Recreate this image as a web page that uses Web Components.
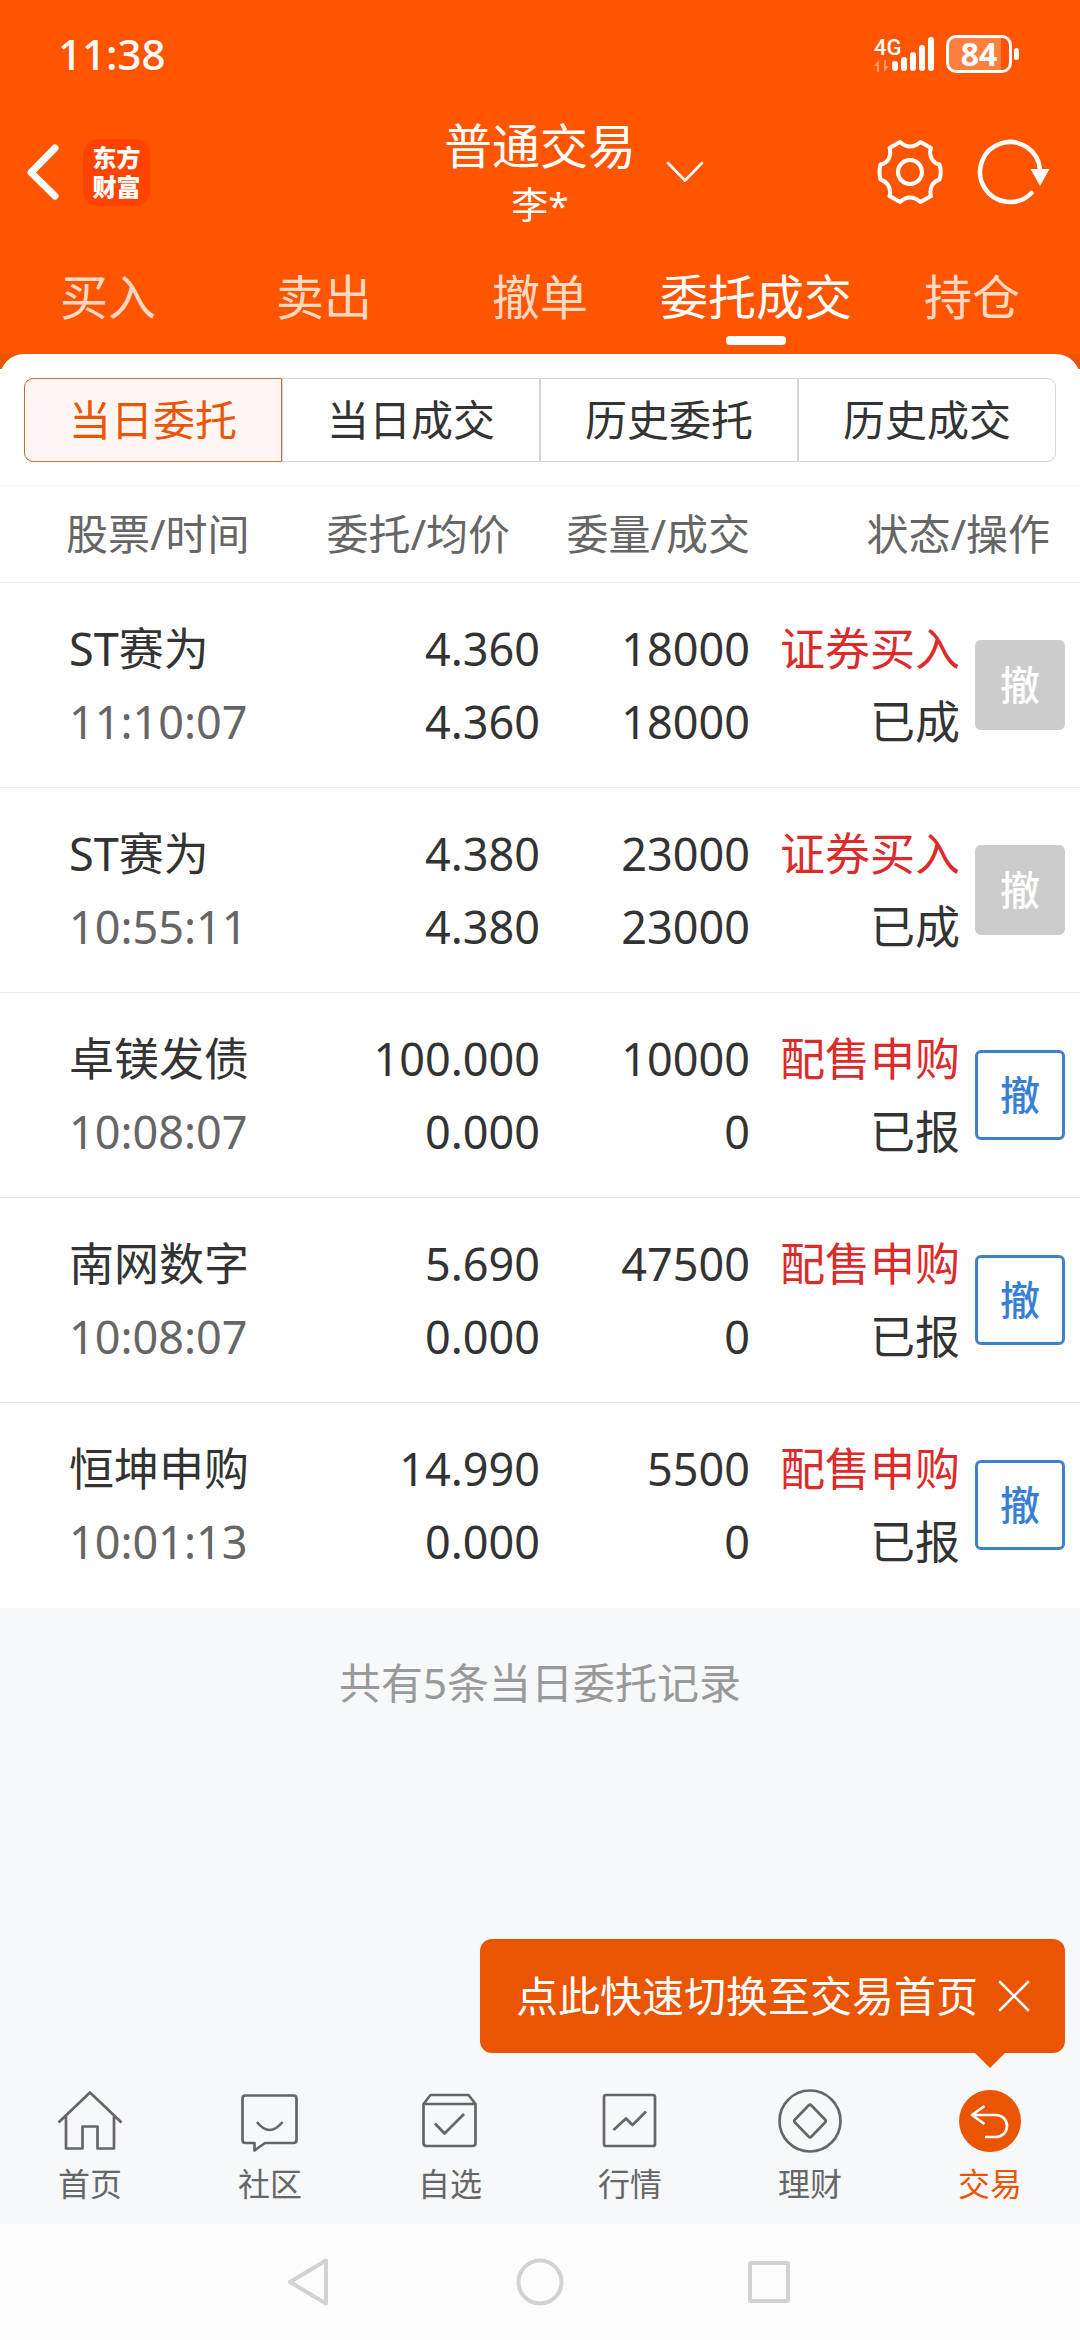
<!DOCTYPE html>
<html lang="zh-CN">
<head>
<meta charset="utf-8">
<meta name="viewport" content="width=device-width, initial-scale=1">
<title>普通交易</title>
<style>
  html { --brand: #ff5500; --accent: #ea5504; --ink: #333; --muted: #666; --page: #f7f8fa; --line: #ececec; }
  body { margin: 0; background: var(--page); color: var(--ink); font-family: "Noto Sans", "Noto Sans CJK SC", sans-serif; }
</style>
</head>
<body>
<trade-app></trade-app>

<script>
const BASE = `
  *, *::before, *::after { box-sizing: border-box; }
  button { font: inherit; color: inherit; background: none; border: 0; margin: 0; padding: 0; cursor: pointer; }
  a { color: inherit; text-decoration: none; }
  svg { display: block; flex: none; }
`;

class BaseElement extends HTMLElement {
  connectedCallback() {
    if (this.shadowRoot) return;
    this.attachShadow({ mode: 'open' }).innerHTML = `<style>${BASE}${this.styles()}</style>${this.markup()}`;
  }
  styles() { return ':host{display:block}'; }
  markup() { return '<slot></slot>'; }
}

/* Phone status bar: clock, signal, battery */
class StatusBar extends BaseElement {
  styles() { return `
    :host { display: flex; align-items: center; justify-content: space-between; height: 108px; padding: 0 61px 0 58px; color: #fff; }
    time { font-size: 42px; line-height: 60px; font-weight: 500; }
    .side { display: flex; align-items: center; }
    .net { display: grid; justify-items: start; width: 18px; }
    .net span { font: 500 22px/24px Roboto, sans-serif; white-space: nowrap; }
    .bars { display: flex; align-items: flex-end; gap: 3px; height: 34px; margin-right: 12px; }
    .bars i { width: 6px; border-radius: 3px; background: #fff; }
    .bars i:nth-child(1) { height: 10px; } .bars i:nth-child(2) { height: 14px; } .bars i:nth-child(3) { height: 19px; }
    .bars i:nth-child(4) { height: 26px; } .bars i:nth-child(5) { height: 34px; }
    .battery { width: 66px; height: 38px; border: 3px solid #fff; border-radius: 10px; background: linear-gradient(90deg, #ff7f3f 86%, transparent 86%); display: grid; place-content: center; font-size: 32px; line-height: 32px; font-weight: 700; }
    .nub { width: 5px; height: 12px; margin-left: 2px; border-radius: 3px; background: #fff; }
  `; }
  markup() { return `
    <time>11:38</time>
    <div class="side">
      <div class="net"><span>4G</span>
        <svg width="15" height="12" viewBox="0 0 15 12" fill="#fff" opacity=".4"><path d="M0 6l5-6v12H3V6zM15 6l-5 6V0h2v6z"/></svg></div>
      <div class="bars"><i></i><i></i><i></i><i></i><i></i></div>
      <div class="battery">84</div><div class="nub"></div>
    </div>
  `; }
}
customElements.define('status-bar', StatusBar);

class TitleBar extends BaseElement {
  styles() { return `
    :host { display: grid; grid-template-columns: 1fr auto 1fr; align-items: center; height: 128px; padding: 0 24px; color: #fff; }
    .left, .right { display: flex; align-items: center; }
    .left { gap: 23px; }
    .logo { width: 67px; height: 67px; border-radius: 15px; background: #ff4400; font-size: 24px; line-height: 29px; font-weight: 900; text-align: center; display: grid; align-content: center; }
    .title { text-align: center; padding-top: 6px; }
    h1 { margin: 0; font-size: 48px; line-height: 60px; font-weight: 400; }
    p { margin: 0; font-size: 37px; line-height: 58px; }
    .right { gap: 34px; padding: 0 6px 0 30px; }
    .right .gear { margin-left: auto; }
  `; }
  markup() { return `
    <div class="left">
      <button aria-label="返回"><svg width="36" height="60" viewBox="0 0 36 60" fill="none" stroke="#fff" stroke-width="7" stroke-linecap="round" stroke-linejoin="round"><path d="M31 6L7 30.500L31 54"/></svg></button>
      <div class="logo"><span>东方</span><span>财富</span></div>
    </div>
    <div class="title"><h1><slot name="title"></slot></h1><p><slot name="user"></slot></p></div>
    <div class="right">
      <button aria-label="切换"><svg width="38" height="24" viewBox="0 0 38 24" fill="none" stroke="#fff" stroke-width="2.600" stroke-linecap="round" stroke-linejoin="round"><path d="M2 3l17 17.500L36 3"/></svg></button>
      <button class="gear" aria-label="设置"><svg width="66" height="66" viewBox="0 0 66 66" fill="none" stroke="#fff" stroke-width="4" stroke-linejoin="round">
        <path d="M23 3Q33 12 43.500 3L54 9C51 17 56 24 62.500 25.500Q65 33 62.500 40.500C55 43 52 50 54 57L43.500 63Q33 54 23 63L12.500 57C14.500 50 11 43 3.500 40.500Q1.500 33 3.500 25.500C11 24 15 17 12.500 9Z"/><circle cx="33" cy="33" r="12"/></svg></button>
      <button aria-label="刷新"><svg width="73" height="66" viewBox="0 0 73 66" fill="none"><path d="M54.500 54A30 30 0 1 1 63 31" stroke="#fff" stroke-width="4.500" stroke-linecap="round"/><path d="M53.500 30h19l-9.500 17z" fill="#fff"/></svg></button>
    </div>
  `; }
}
customElements.define('title-bar', TitleBar);

class TradeTab extends BaseElement {
  styles() { return `
    :host { display: block; flex: 1 1 0; }
    a { display: flex; flex-direction: column; align-items: center; gap: 9px; padding: 31px 0 9px; font-size: 48px; line-height: 60px; white-space: nowrap; color: #ffd8c2; }
    a::after { content: ""; width: 60px; height: 9px; border-radius: 4px; }
    :host([active]) a { color: #fff; }
    :host([active]) a::after { background: #fff; }
  `; }
  markup() { return '<a href="#"><slot></slot></a>'; }
}
customElements.define('trade-tab', TradeTab);

class TradeTabs extends BaseElement {
  styles() { return ':host{display:block} nav{display:flex}'; }
  markup() { return '<nav><slot></slot></nav>'; }
}
customElements.define('trade-tabs', TradeTabs);

class SegmentButton extends BaseElement {
  styles() { return `
    :host { display: block; flex: 1 1 0; }
    button { width: 100%; height: 84px; border: 1px solid #d4d6d8; font-size: 42px; line-height: 60px; }
    :host(:first-child) button { border-radius: 9px 0 0 9px; }
    :host([last]) button { border-radius: 0 9px 9px 0; }
    :host([active]) button { color: var(--accent); background: #fff6f3; border-color: #c0703c; }
  `; }
  markup() { return '<button><slot></slot></button>'; }
}
customElements.define('segment-button', SegmentButton);

/* White sheet that rises over the orange header */
class ContentSheet extends BaseElement {
  styles() { return `
    :host { display: block; background: linear-gradient(var(--accent) 15px, #fff 15px); }
    .sheet { background: #fff; border-radius: 24px 24px 0 0; padding-top: 24px; }
    .segments { display: flex; padding: 0 24px 23px; border-bottom: 1px solid #f6f6f6; }
  `; }
  markup() { return '<div class="sheet"><div class="segments"><slot name="segment"></slot></div><slot></slot></div>'; }
}
customElements.define('content-sheet', ContentSheet);

const ORDERS = [
  { name: 'ST赛为', time: '11:10:07', price: '4.360', avg: '4.360', amount: '18000', done: '18000', side: '证券买入', state: '已成', closed: true },
  { name: 'ST赛为', time: '10:55:11', price: '4.380', avg: '4.380', amount: '23000', done: '23000', side: '证券买入', state: '已成', closed: true },
  { name: '卓镁发债', time: '10:08:07', price: '100.000', avg: '0.000', amount: '10000', done: '0', side: '配售申购', state: '已报' },
  { name: '南网数字', time: '10:08:07', price: '5.690', avg: '0.000', amount: '47500', done: '0', side: '配售申购', state: '已报' },
  { name: '恒坤申购', time: '10:01:13', price: '14.990', avg: '0.000', amount: '5500', done: '0', side: '配售申购', state: '已报' },
];

class OrderTable extends BaseElement {
  styles() { return `
    :host { display: block; }
    table { width: 100%; table-layout: fixed; border-collapse: separate; border-spacing: 0; }
    th { height: 97px; padding: 0; border-bottom: 1px solid var(--line); font-size: 42px; line-height: 60px; font-weight: 400; color: var(--muted); text-align: right; white-space: nowrap; }
    th:first-child { text-align: left; padding-left: 66px; }
    th:nth-child(2) { padding-right: 30px; }
    th:last-child { padding-right: 30px; }
    td { height: 205px; padding: 0; border-bottom: 1px solid var(--line); font-size: 45px; line-height: 73px; text-align: right; white-space: nowrap; }
    tr:last-child td { border-bottom-color: transparent; }
    td:first-child { text-align: left; padding-left: 69px; }
    td span { display: block; }
    td:first-child span + span { color: var(--muted); }
    .side { color: #dc2b2b; }
    td:last-child { padding-right: 15px; }
    td button { width: 90px; height: 90px; display: block; margin-left: auto; border: 3px solid #3f80cc; border-radius: 6px; color: #377fd6; font-size: 40px; line-height: 60px; font-weight: 500; }
    td button:disabled { background: #ccc; border-color: #ccc; color: #fff; }
    .c2 { width: 230px; } .c3 { width: 210px; } .c4 { width: 210px; } .c5 { width: 120px; }
  `; }
  markup() { return `
    <table>
      <colgroup><col><col class="c2"><col class="c3"><col class="c4"><col class="c5"></colgroup>
      <thead><tr><th>股票/时间</th><th>委托/均价</th><th>委量/成交</th><th colspan="2">状态/操作</th></tr></thead>
      <tbody>${ORDERS.map(o => `<tr>
        <td><span>${o.name}</span><span>${o.time}</span></td>
        <td><span>${o.price}</span><span>${o.avg}</span></td>
        <td><span>${o.amount}</span><span>${o.done}</span></td>
        <td><span class="side">${o.side}</span><span>${o.state}</span></td>
        <td><button ${o.closed ? 'disabled' : ''}>撤</button></td></tr>`).join('')}</tbody>
    </table>
  `; }
}
customElements.define('order-table', OrderTable);

class ListNote extends BaseElement {
  styles() { return `:host { display: block; padding: 45px 24px; text-align: center; font-size: 42px; line-height: 60px; color: #999; }`; }
}
customElements.define('list-note', ListNote);

class QuickTip extends BaseElement {
  styles() { return `
    :host { display: flex; align-items: center; gap: 18px; height: 114px; padding: 0 33px 0 36px; border-radius: 12px; background: var(--accent); color: #fff; font-size: 42px; line-height: 60px; white-space: nowrap; }
    :host::after { content: ""; position: absolute; top: 100%; right: 60px; border: 15px solid transparent; border-top-color: var(--accent); border-bottom: 0; }
  `; }
  markup() { return `<span><slot></slot></span>
    <button aria-label="关闭"><svg width="36" height="36" viewBox="0 0 36 36" stroke="#fff" stroke-width="2.600" stroke-linecap="round"><path d="M4 4l28 28M32 4L4 32"/></svg></button>`; }
}
customElements.define('quick-tip', QuickTip);

const NAV_ICONS = {
  home: '<path d="M0.500 33.500L32 3.500L63.500 33.500M8 27.500V59.500H24.500V37.500H39.500V59.500H56V27.500"/>',
  community: '<path d="M7.500 6.500H55.500Q58.500 6.500 58.500 9.500V51Q58.500 54 55.500 54H27L16.500 61.500V54H7.500Q4.500 54 4.500 51V9.500Q4.500 6.500 7.500 6.500Z"/><path d="M19 33Q31.500 49 44.500 33"/>',
  box: '<path d="M5.500 15L12.500 6H50.500L57.500 15V54Q57.500 57 54.500 57H8.500Q5.500 57 5.500 54ZM5.500 15H57.500M17 34.500L26.500 44.500L46 25"/>',
  chart: '<rect x="6" y="6" width="51" height="51" rx="2"/><path d="M15.500 41L28 29.500L34.500 36L48 22.500"/>',
  coin: '<circle cx="32" cy="32" r="30.500"/><path d="M30.500 16.500Q32 15 33.500 16.500L47 30.500Q48.500 32 47 33.500L33.500 47.500Q32 49 30.500 47.500L17 33.500Q15.500 32 17 30.500Z"/>',
  trade: '<circle cx="32" cy="32" r="31" fill="var(--accent)" stroke="none"/><path stroke="#fff" d="M26.500 17L14 26L26.500 35M14 26H38A11 11 0 0 1 38 48H27"/>',
};

class NavItem extends BaseElement {
  styles() { return `
    :host { display: block; flex: 1 1 0; }
    a { display: flex; flex-direction: column; align-items: center; padding-top: 21px; gap: 7px; font-size: 32px; line-height: 48px; color: var(--muted); }
    :host([active]) a { color: var(--accent); }
    svg { overflow: visible; }
  `; }
  markup() { return `<a href="#"><svg width="64" height="64" viewBox="0 0 64 64" fill="none" stroke="#666" stroke-width="2.700" stroke-linejoin="round">${NAV_ICONS[this.getAttribute('icon')]}</svg><slot></slot></a>`; }
}
customElements.define('nav-item', NavItem);

class BottomNav extends BaseElement {
  styles() { return `
    :host { display: block; position: relative; }
    nav { display: flex; height: 156px; }
    ::slotted(quick-tip) { position: absolute; right: 15px; bottom: calc(100% + 15px); }
  `; }
  markup() { return '<slot name="tip"></slot><nav><slot></slot></nav>'; }
}
customElements.define('bottom-nav', BottomNav);

class SystemKeys extends BaseElement {
  styles() { return `
    :host { display: flex; align-items: center; justify-content: center; gap: 166px; height: 116px; background: #fcfcfc; }
    svg { fill: none; stroke: #d2d2d2; stroke-width: 4; stroke-linejoin: round; }
  `; }
  markup() { return `
    <button aria-label="后退"><svg width="64" height="64" viewBox="0 0 64 64"><path d="M12 32L48 10.500V53.500Z"/></svg></button>
    <button aria-label="主页"><svg width="64" height="64" viewBox="0 0 64 64"><circle cx="32" cy="32" r="21.500"/></svg></button>
    <button aria-label="最近任务"><svg width="64" height="64" viewBox="0 0 64 64"><rect x="12" y="13" width="38" height="38" rx="1"/></svg></button>
  `; }
}
customElements.define('system-keys', SystemKeys);

class TradeApp extends BaseElement {
  styles() { return `
    :host { display: flex; flex-direction: column; min-height: 100vh; }
    header { background: var(--brand); }
    main { flex: 1; }
  `; }
  markup() { return `
    <header>
      <status-bar></status-bar>
      <title-bar><span slot="title">普通交易</span><span slot="user">李*</span></title-bar>
      <trade-tabs><trade-tab>买入</trade-tab><trade-tab>卖出</trade-tab><trade-tab>撤单</trade-tab><trade-tab active>委托成交</trade-tab><trade-tab>持仓</trade-tab></trade-tabs>
    </header>
    <main>
      <content-sheet>
        <segment-button slot="segment" active>当日委托</segment-button>
        <segment-button slot="segment">当日成交</segment-button>
        <segment-button slot="segment">历史委托</segment-button>
        <segment-button slot="segment" last>历史成交</segment-button>
        <order-table></order-table>
      </content-sheet>
      <list-note>共有5条当日委托记录</list-note>
    </main>
    <bottom-nav>
      <quick-tip slot="tip">点此快速切换至交易首页</quick-tip>
      <nav-item icon="home">首页</nav-item>
      <nav-item icon="community">社区</nav-item>
      <nav-item icon="box">自选</nav-item>
      <nav-item icon="chart">行情</nav-item>
      <nav-item icon="coin">理财</nav-item>
      <nav-item icon="trade" active>交易</nav-item>
    </bottom-nav>
    <system-keys></system-keys>
  `; }
}
customElements.define('trade-app', TradeApp);
</script>
</body>
</html>
